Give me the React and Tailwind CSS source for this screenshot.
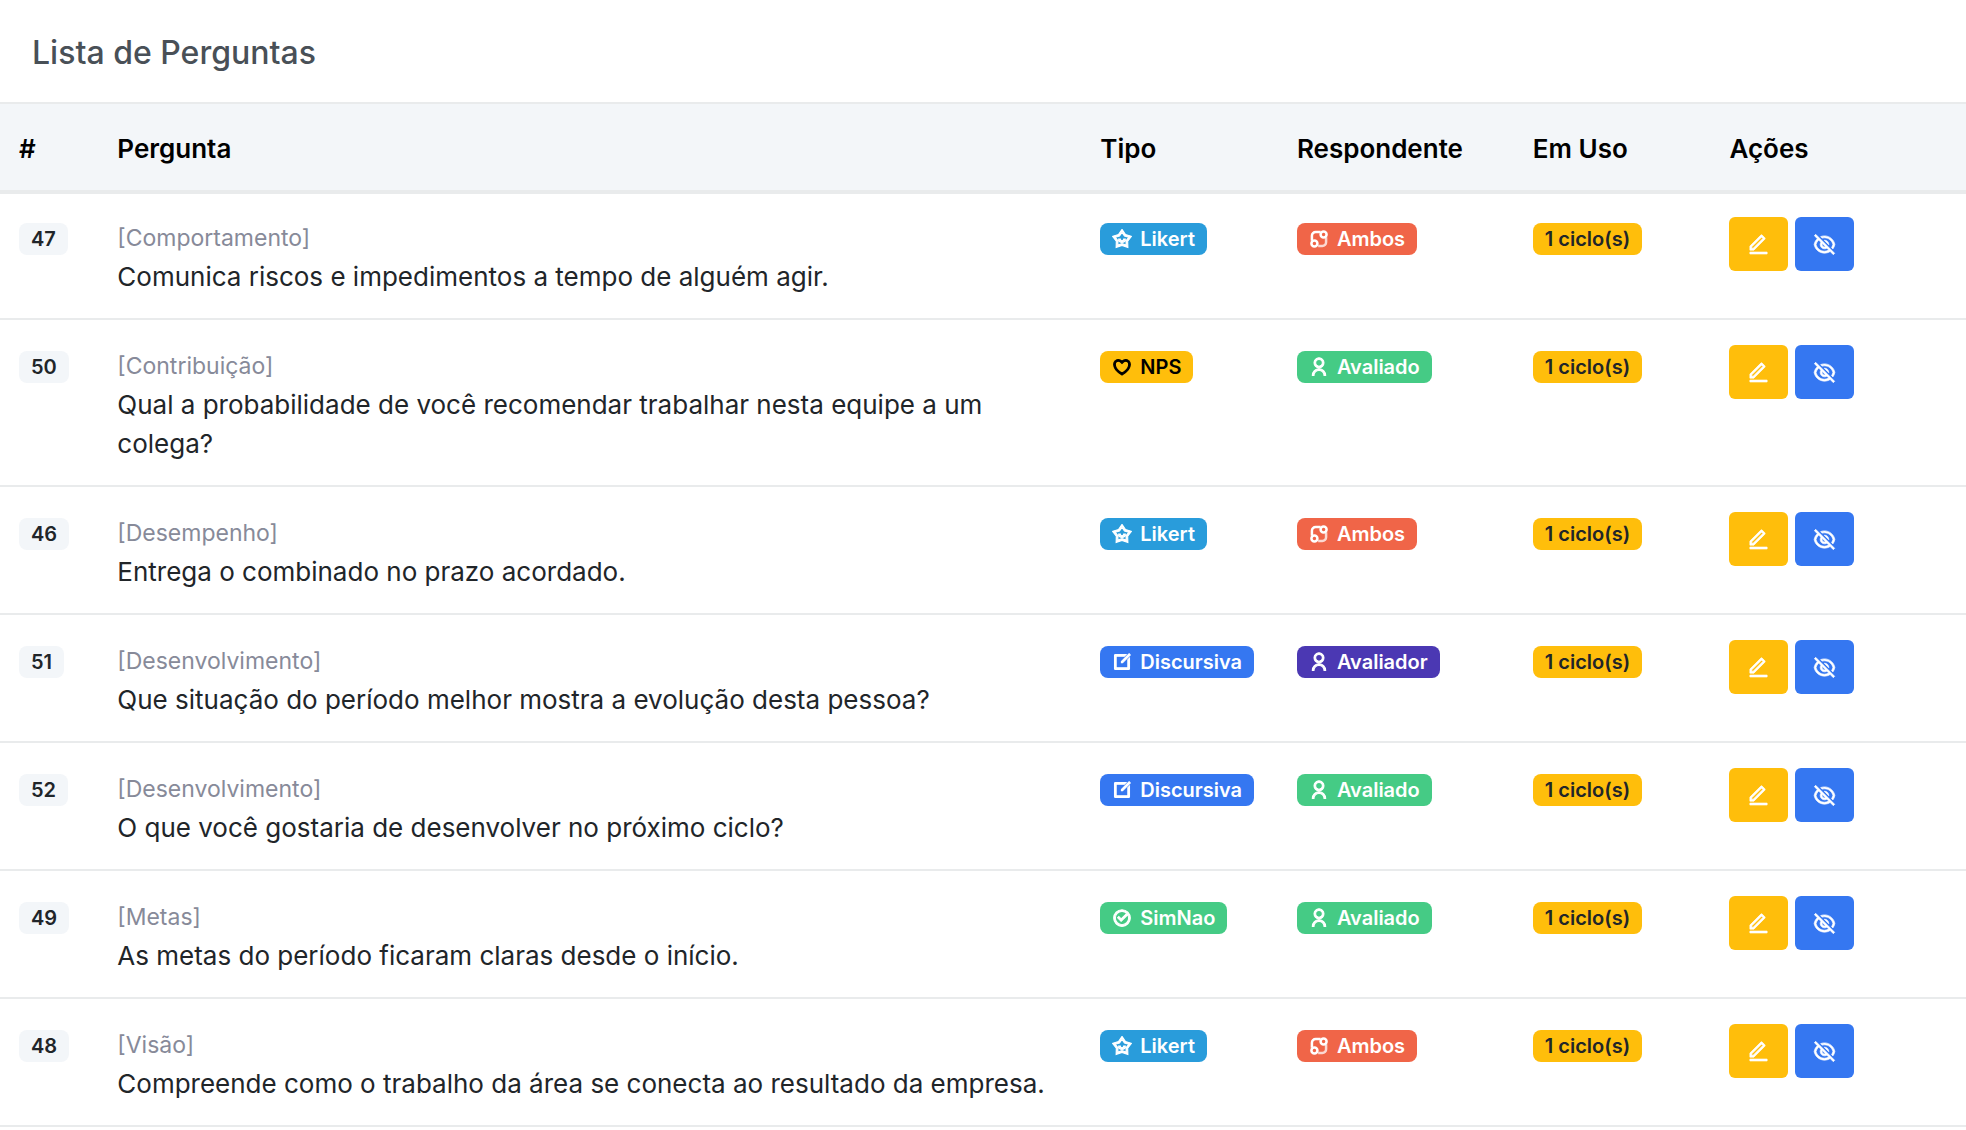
import React from 'react';
import { RiStarSmileLine, RiHeart3Line, RiEditBoxLine, RiCheckboxCircleLine, RiEditLine, RiEyeOffLine, RiUserLine } from 'react-icons/ri';

// two linked circles, used when both sides answer
function AmbosIcon() {
  return (
    <svg viewBox="0 0 24 24" fill="none" stroke="currentColor" className="size-5" aria-hidden="true">
      <g strokeWidth="3">
        <circle cx="17.5" cy="6.5" r="3.6" />
        <circle cx="6.5" cy="17.5" r="3.6" />
        <path d="M3.5 14V8A4.5 4.5 0 0 1 8 3.5H14" />
        <path d="M20.5 10V16A4.5 4.5 0 0 1 16 20.5H11" opacity="0.75" />
      </g>
    </svg>
  );
}

const tipos = {
  Likert: { Icon: RiStarSmileLine, style: 'bg-[#299cdb] text-white' },
  NPS: { Icon: RiHeart3Line, style: 'bg-[#ffbe0b] text-black' },
  Discursiva: { Icon: RiEditBoxLine, style: 'bg-[#3577f1] text-white' },
  SimNao: { Icon: RiCheckboxCircleLine, style: 'bg-[#45cb85] text-white' },
};

const respondentes = {
  Ambos: { Icon: AmbosIcon, style: 'bg-[#f06548] text-white' },
  Avaliado: { Icon: RiUserLine, style: 'bg-[#45cb85] text-white' },
  Avaliador: { Icon: RiUserLine, style: 'bg-[#4b38b3] text-white' },
};

const perguntas = [
  { id: 47, grupo: 'Comportamento', texto: 'Comunica riscos e impedimentos a tempo de alguém agir.', tipo: 'Likert', respondente: 'Ambos' },
  { id: 50, grupo: 'Contribuição', texto: 'Qual a probabilidade de você recomendar trabalhar nesta equipe a um colega?', tipo: 'NPS', respondente: 'Avaliado' },
  { id: 46, grupo: 'Desempenho', texto: 'Entrega o combinado no prazo acordado.', tipo: 'Likert', respondente: 'Ambos' },
  { id: 51, grupo: 'Desenvolvimento', texto: 'Que situação do período melhor mostra a evolução desta pessoa?', tipo: 'Discursiva', respondente: 'Avaliador' },
  { id: 52, grupo: 'Desenvolvimento', texto: 'O que você gostaria de desenvolver no próximo ciclo?', tipo: 'Discursiva', respondente: 'Avaliado' },
  { id: 49, grupo: 'Metas', texto: 'As metas do período ficaram claras desde o início.', tipo: 'SimNao', respondente: 'Avaliado' },
  { id: 48, grupo: 'Visão', texto: 'Compreende como o trabalho da área se conecta ao resultado da empresa.', tipo: 'Likert', respondente: 'Ambos' },
];

function Badge({ Icon, style, children }) {
  return (
    <span className={`mt-1.5 flex h-8 w-fit items-center gap-2 rounded-lg px-3 text-[20px] font-semibold whitespace-nowrap ${style}`}>
      {Icon && <Icon className="size-5 stroke-[1.3]" />}
      {children}
    </span>
  );
}

function Th({ className, children }) {
  return (
    <th className={`border-t-2 border-b-2 border-[#e9ebec] bg-[#f3f6f9] px-[19px] pt-[25px] pb-[22px] font-semibold ${className}`}>
      {children}
    </th>
  );
}

function Td({ children }) {
  return <td className="border-b-2 border-[#e9ebec] px-[19px] pt-[25px] pb-[22px] align-top">{children}</td>;
}

export default function App() {
  return (
    <div className="bg-white font-['Inter',sans-serif] text-[26px] leading-[39px] text-[#212529]">
      <div className="px-8 pt-[33px] pb-[30px]">
        <h5 className="text-[32px] font-medium text-[#495057]">Lista de Perguntas</h5>
      </div>
      <table className="w-full table-fixed border-separate border-spacing-0 text-left">
        <thead className="text-black">
          <tr>
            <Th className="w-[5%]">#</Th>
            <Th className="w-[50%]">Pergunta</Th>
            <Th className="w-[10%]">Tipo</Th>
            <Th className="w-[12%]">Respondente</Th>
            <Th className="w-[10%]">Em Uso</Th>
            <Th className="w-[13%]">Ações</Th>
          </tr>
        </thead>
        {/* the first row thickens the divider under the header */}
        <tbody className="[&>tr:first-child>td]:shadow-[inset_0_2px_0_#e9ebec]">
          {perguntas.map((p) => (
            <tr key={p.id}>
              <Td><Badge style="bg-[#f3f6f9] text-[#212529]">{p.id}</Badge></Td>
              <Td>
                <div className="pt-[3px]">
                  <p className="text-[23px] leading-[37px] text-[#878a99]">[{p.grupo}]</p>
                  <p>{p.texto}</p>
                </div>
              </Td>
              <Td><Badge {...tipos[p.tipo]}>{p.tipo}</Badge></Td>
              <Td><Badge {...respondentes[p.respondente]}>{p.respondente}</Badge></Td>
              <Td><Badge style="bg-[#ffbe0b] text-[#212529]">1 ciclo(s)</Badge></Td>
              <Td>
                <div className="flex gap-[7px]">
                  <button type="button" aria-label="Editar" className="flex h-[54px] w-[59px] items-center justify-center rounded-md bg-[#ffbe0b] text-white">
                    <RiEditLine className="size-[23px] stroke-[0.7]" />
                  </button>
                  <button type="button" aria-label="Ocultar" className="flex h-[54px] w-[59px] items-center justify-center rounded-md bg-[#3577f1] text-white">
                    <RiEyeOffLine className="size-[23px] stroke-[0.7]" />
                  </button>
                </div>
              </Td>
            </tr>
          ))}
        </tbody>
      </table>
    </div>
  );
}
